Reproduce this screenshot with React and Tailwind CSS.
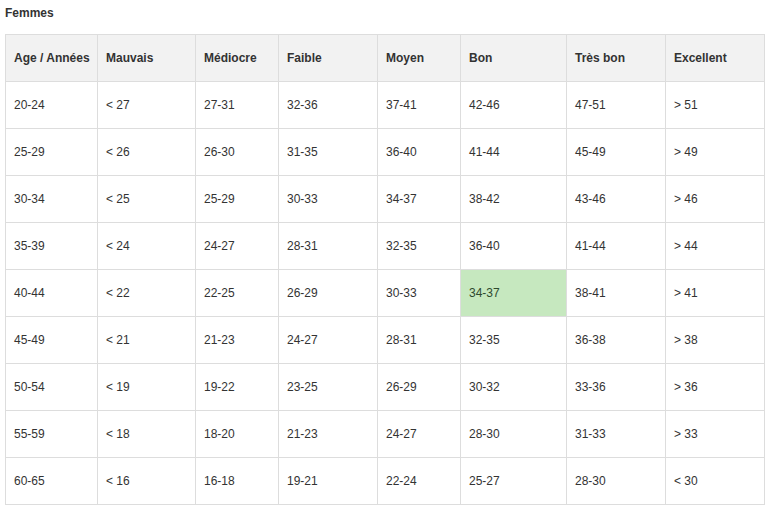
const rows = [
["20-24","< 27","27-31","32-36","37-41","42-46","47-51","> 51"],
["25-29","< 26","26-30","31-35","36-40","41-44","45-49","> 49"],
["30-34","< 25","25-29","30-33","34-37","38-42","43-46","> 46"],
["35-39","< 24","24-27","28-31","32-35","36-40","41-44","> 44"],
["40-44","< 22","22-25","26-29","30-33","34-37","38-41","> 41"],
["45-49","< 21","21-23","24-27","28-31","32-35","36-38","> 38"],
["50-54","< 19","19-22","23-25","26-29","30-32","33-36","> 36"],
["55-59","< 18","18-20","21-23","24-27","28-30","31-33","> 33"],
["60-65","< 16","16-18","19-21","22-24","25-27","28-30","< 30"],
];
const heads = ["Age / Années","Mauvais","Médiocre","Faible","Moyen","Bon","Très bon","Excellent"];
const widths = ["w-[92px]","w-[98px]","w-[83px]","w-[99px]","w-[83px]","w-[106px]","w-[99px]","w-[99px]"];
export default function App() {
  return (
    <div className="bg-white w-[772px] h-[512px] text-[12px] text-[#333] pl-[5px]" style={{fontFamily:'"Liberation Sans", Arial, sans-serif'}}>
      <div className="font-bold pt-[6px] h-[34px] leading-[15px]">Femmes</div>
      <table className="table-fixed border-collapse w-[760px]">
        <thead>
          <tr className="bg-[#f2f2f2] h-[47px]">
            {heads.map((h,i)=>(<th key={i} className={`${widths[i]} border border-[#dddddd] text-left font-bold pl-[8px] align-middle`}>{h}</th>))}
          </tr>
        </thead>
        <tbody>
          {rows.map((r,ri)=>(
            <tr key={ri} className="h-[47px]">
              {r.map((c,ci)=>{
                const g = ri===4 && ci===5;
                return <td key={ci} className={`border border-[#dddddd] pl-[8px] align-middle ${g?"bg-[#c6e8bf] text-[#2e4a2e]":""}`}>{c}</td>;
              })}
            </tr>
          ))}
        </tbody>
      </table>
    </div>
  );
}
